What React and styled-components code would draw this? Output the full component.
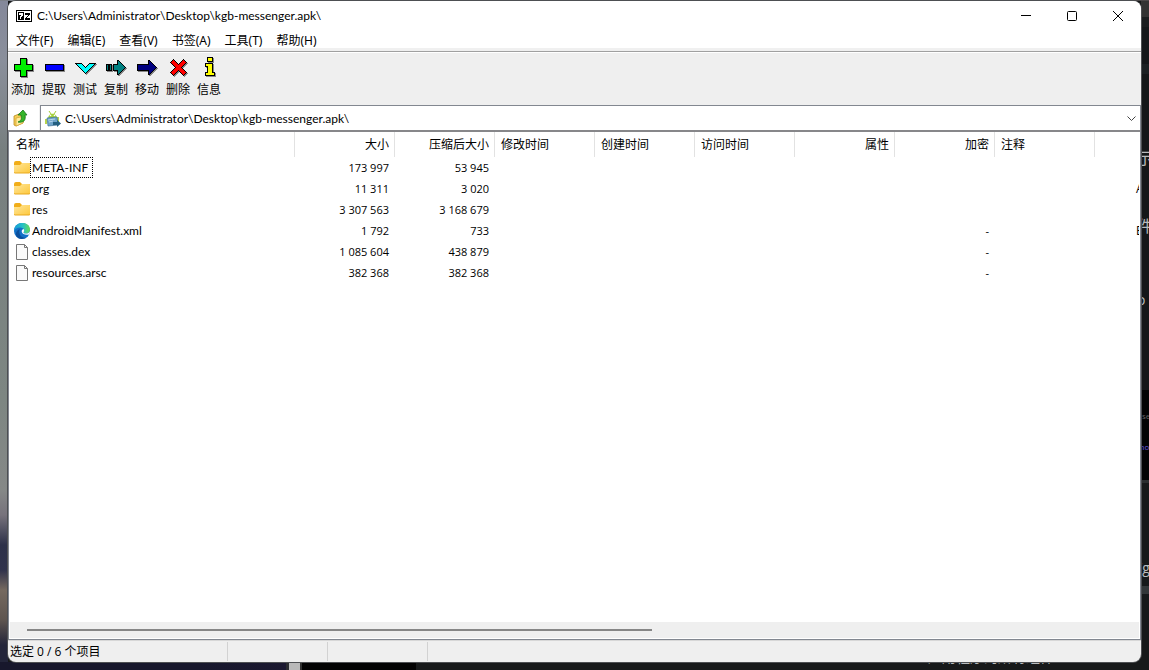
import React from "react";
import styled, { createGlobalStyle } from "styled-components";

const GlobalStyle = createGlobalStyle`
  * { box-sizing: border-box; }
  html, body, #root { height: 100%; margin: 0; }
  body, button, input {
    font-family: "Open Sans", "Noto Sans CJK SC", sans-serif;
    font-size: 12px;
    line-height: 16px;
    color: #000;
  }
  button { border: 0; padding: 0; background: none; }
`;

const nameFont = `"Lato", "Noto Sans CJK SC", sans-serif`;

const Desktop = styled.div`
  position: relative;
  display: flex;
  min-height: 100vh;
  padding: 1px 8px 8px;
  overflow: hidden;
  background:
    linear-gradient(90deg, #17172c 0 200px, #1b1830 286px, #2a2c30 286px 289px, #b9b9b9 289px 300px, #303030 300px 302px, #020202 302px 416px, #17191a 416px) 0 100% / 100% 8px no-repeat,
    linear-gradient(90deg, #7c8088 0 301px, #4b4849 301px) 0 0 / 100% 1px no-repeat,
    linear-gradient(180deg, #333 0 17px, #1b1d1f 17px 27px, #15171a 27px 64px, #1c2023 64px 74px, #151719 74px 390px, #030303 390px 480px, #2b2e30 480px 483px, #17191a 483px 586px, #333739 586px 594px, #17191a 594px) 100% 0 / 8px 100% no-repeat,
    linear-gradient(180deg, #84889a 0, #8a8f9b 60px, #777f7f 150px, #7d8682 400px, #858887 490px, #77737c 515px, #2d3149 545px, #30334c 570px, #75695f 590px, #5e5550 620px, #23253a 645px) 0 0 / 8px 100% no-repeat,
    #17191a;
`;

const BackText = styled.span`
  position: absolute;
  top: ${(p) => p.$top}px;
  left: ${(p) => p.$left || "calc(100% - 12px)"};
  font-size: ${(p) => p.$size || 16}px;
  line-height: 20px;
  white-space: nowrap;
  color: ${(p) => p.$color || "#b9bcbe"};
`;

const Window = styled.main`
  position: relative;
  display: flex;
  flex: 1;
  flex-direction: column;
  min-width: 0;
  overflow: hidden;
  border-radius: 8px;
  background: #efefef;
  box-shadow: 0 0 0 1px #4d4f52;
`;

const TitleBar = styled.header`
  display: flex;
  align-items: center;
  height: 29px;
  padding-left: 8px;
  background: #fff;
`;

const Title = styled.h1`
  flex: 1;
  margin: 0 0 0 5px;
  font-family: ${nameFont};
  font-size: 12px;
  font-weight: 400;
`;

const WindowButton = styled.button`
  display: grid;
  place-items: center;
  width: 46px;
  height: 28px;
`;

const MenuBar = styled.nav`
  display: flex;
  align-items: center;
  height: 20px;
  padding: 2px 0 0 1px;
  background: linear-gradient(#fff 18px, #f0f0f0 18px);
`;

const MenuItem = styled.button`
  padding: 0 7px;
  font-family: "Noto Sans", "Noto Sans CJK SC", sans-serif;
`;

const ToolBar = styled.div`
  display: flex;
  height: 54px;
  padding-top: 4px;
  border-top: 1px solid #a0a0a0;
  box-shadow: inset 0 1px #fff;
  margin-top: 1px;
`;

const ToolButton = styled.button`
  display: flex;
  flex-direction: column;
  align-items: center;
  width: 31px;
  padding-right: 1px;
  white-space: nowrap;
  svg { display: block; margin-bottom: 2px; }
`;

const AddressRow = styled.div`
  display: flex;
  height: 25px;
`;

const UpButton = styled.button`
  display: grid;
  place-items: center;
  width: 31px;
  padding-right: 5px;
  background: #fff;
`;

const AddressBox = styled.label`
  display: flex;
  flex: 1;
  align-items: center;
  gap: 4px;
  margin-left: 1px;
  padding: 1px 3px 0 4px;
  border: 1px solid #828790;
  border-bottom: 0;
  background: #fff;
`;

const AddressInput = styled.input`
  flex: 1;
  min-width: 0;
  padding: 0;
  border: 0;
  outline: 0;
  font-family: ${nameFont};
  background: none;
`;

const DropButton = styled.button`
  display: grid;
  place-items: center;
  width: 12px;
  height: 20px;
`;

const FilePane = styled.section`
  display: flex;
  flex: 1;
  flex-direction: column;
  min-height: 0;
  padding: 0 1px 1px;
  border: 1px solid #828790;
  border-top: 2px solid #87878a;
  background: #fff;
`;

const TableArea = styled.div`
  flex: 1;
  overflow: hidden;
`;

const FileTable = styled.table`
  width: 100%;
  table-layout: fixed;
  border-spacing: 0;
  th, td {
    padding: 0 5px 0 6px;
    overflow: hidden;
    font-weight: 400;
    white-space: nowrap;
  }
  td { height: 21px; }
`;

const Column = styled.col`
  width: ${(p) => (p.$width ? p.$width + "px" : "auto")};
`;

const HeadCell = styled.th`
  height: 25px;
  text-align: ${(p) => p.$align};
  border-right: ${(p) => (p.$last ? "0" : "1px solid #e2e2e2")};
`;

const Cell = styled.td`
  && { padding-right: 6px; }
  font-size: 11px;
  text-align: right;
`;

const CrcCell = styled.td`
  && { padding: 0 0 0 41px; }
`;

const NameCell = styled.td`
  && { padding: 0 0 0 4px; }
  > div { display: flex; align-items: center; }
`;

const FileName = styled.span`
  height: 21px;
  padding: ${(p) => (p.$focused ? "2px 4px 0 1px" : "3px 5px 0 2px")};
  border: ${(p) => (p.$focused ? "1px dotted #000" : "0")};
  font-family: ${nameFont};
`;

const ScrollTrack = styled.div`
  height: 16px;
  padding: 7px 16px 0 17px;
  background: #efefef;
`;

const ScrollThumb = styled.div`
  width: 57%;
  height: 2px;
  background: #868686;
`;

const StatusBar = styled.footer`
  display: flex;
  height: 22px;
  padding: 1px 0;
  border-top: 1px solid #d7d7d7;
`;

const StatusCell = styled.div`
  width: ${(p) => p.$width}px;
  padding: 2px 2px 0;
  border-right: 1px solid #d2d2d2;
`;

const SevenZipIcon = () => (
  <svg width="16" height="12" viewBox="0 0 16 12" shapeRendering="crispEdges" aria-hidden="true">
    <rect width="16" height="12" fill="#000" />
    <rect x="1" y="1" width="14" height="10" fill="#fff" />
    <rect x="2" y="2" width="6" height="8" fill="#000" />
    <path d="M3 3h4v3h-1v1h-1v2h-1v-3h1v-1h-2z" fill="#fff" />
    <path d="M9 3h5v2h-1v1h-1v1h-1v1h3v2h-5v-2h1v-1h1v-1h1v-1h-3z" fill="#000" />
  </svg>
);

const shapes = {
  add: { fill: "#00f000", d: "M9.500 2.500h6v6h6v6h-6v6h-6v-6h-6v-6h6z" },
  extract: { fill: "#0000ff", d: "M3.500 8.500h18v6h-18z" },
  test: { fill: "#00ffff", d: "M2.500 7.500h6l4 4 4-4h6l-10 10z" },
  copy: { fill: "#008080", d: "M2.500 8.500h2v6h-2zM5.500 8.500h2v6h-2zM9.500 8.500h4v-4h1l7 7-7 7h-1v-4h-4z" },
  move: { fill: "#000080", d: "M2.500 8.500h11v-4h1l7 7-7 7h-1v-4h-11z" },
  remove: { fill: "#ff0000", d: "M7.500 3.500l5 5 5-5 3 3-5 5 5 5-3 3-5-5-5 5-3-3 5-5-5-5z" },
  info: { fill: "#ffff00", d: "M10.500 1.500h5v4h-5zM8.500 7.500h7v9h2v3h-9v-3h2v-6h-2z" },
};

const ToolIcon = ({ kind }) => (
  <svg width="24" height="24" viewBox="0 0 24 24" shapeRendering="crispEdges" aria-hidden="true">
    <path d={shapes[kind].d} transform="translate(1 1)" fill="#888" stroke="#888" />
    <path d={shapes[kind].d} fill={shapes[kind].fill} stroke="#000" />
  </svg>
);

const UpIcon = () => (
  <svg width="16" height="18" viewBox="0 0 16 18" aria-hidden="true">
    <path d="M1 7l5-2 1 1 3-1v9l-7 3-2-1z" fill="#f5cf57" stroke="#bd8b21" strokeWidth=".8" />
    <path d="M3 17V9l9-2-2 7z" fill="#ffec9a" stroke="#d8a638" strokeWidth=".8" />
    <path d="M5 13c3-1 4-3 3-7H5l5-5 4 5h-2c1 5-1 8-7 7z" fill="#35b52a" stroke="#167619" strokeWidth=".8" />
  </svg>
);

const ApkIcon = () => (
  <svg width="16" height="16" viewBox="0 0 16 16" aria-hidden="true">
    <path d="M3 8c0-7 9-7 9 0z" fill="#a4d03a" />
    <path d="M4 0l2 3M11 0L9 3" stroke="#a4c934" />
    <circle cx="5.500" cy="4.500" r=".8" fill="#fff" />
    <circle cx="9.500" cy="4.500" r=".8" fill="#fff" />
    <path d="M0 8h2v5H0zM12 6h2v5h-2z" fill="#b7d44b" />
    <path d="M2 7l10-1 1 8-10 1z" fill="#6fa3c9" stroke="#407296" strokeWidth=".7" />
    <path d="M3 9l7-1M4 11l4-1" stroke="#b7d6ec" />
    <path d="M8 11h4V9l4 3.500-4 3.500v-2H8z" fill="#235f7f" />
  </svg>
);

const FolderIcon = () => (
  <svg width="16" height="16" viewBox="0 0 16 16" aria-hidden="true">
    <defs>
      <linearGradient id="folder" x1="0" y1="0" x2="1" y2="1">
        <stop stopColor="#ffe69a" />
        <stop offset="1" stopColor="#fdc83d" />
      </linearGradient>
    </defs>
    <path d="M0 3q0-2 2-2h4l2 2h7q1 0 1 1v6H0z" fill="#f1ad18" />
    <path d="M0 5h6l2-2h7q1 0 1 1v8q0 1-1 1H1q-1 0-1-1z" fill="url(#folder)" />
    <path d="M0 12q0 1 1 1h14q1 0 1-1" fill="none" stroke="#e9a91e" />
  </svg>
);

const EdgeIcon = () => (
  <svg width="16" height="16" viewBox="0 0 16 16" aria-hidden="true">
    <defs>
      <linearGradient id="edgeTop" x1="0" x2="1">
        <stop stopColor="#169bd8" />
        <stop offset=".55" stopColor="#27c0c5" />
        <stop offset="1" stopColor="#66dc57" />
      </linearGradient>
    </defs>
    <circle cx="8" cy="8" r="8" fill="#1271c8" />
    <path d="M0 8C0-2.500 16-2.500 16 6.500c0 3-2.500 4.300-5 4-1.800-.2-1.800-1-1.200-1.800C11 6.500 9 4.500 6 4.500c-3 0-5 1.500-6 3.500z" fill="url(#edgeTop)" />
    <path d="M6 6C4 9 6 15 12 14.800 10 16 7 16.500 4.500 15.200 0 12.500 2 7 6 6z" fill="#0b4f9d" />
    <path d="M9.500 6C6 7 7.500 13 15.200 11.500 16 10 16 9 16 8c-1 2.300-3 2.800-5 2.500-1.500-.3-1.900-1-1.200-1.800.6-.9.500-2-.3-2.700z" fill="#fff" />
  </svg>
);

const DocumentIcon = () => (
  <svg width="16" height="16" viewBox="0 0 16 16" aria-hidden="true">
    <path d="M2.500.5h8l3 3v12h-11z" fill="#fafafa" stroke="#777" />
    <path d="M10.500.5v3h3" fill="none" stroke="#777" />
  </svg>
);

const fileIcons = { folder: FolderIcon, edge: EdgeIcon, document: DocumentIcon };

const menus = ["文件(F)", "编辑(E)", "查看(V)", "书签(A)", "工具(T)", "帮助(H)"];

const tools = [
  ["add", "添加"],
  ["extract", "提取"],
  ["test", "测试"],
  ["copy", "复制"],
  ["move", "移动"],
  ["remove", "删除"],
  ["info", "信息"],
];

const columns = [
  ["名称", "left", 285],
  ["大小", "right", 100],
  ["压缩后大小", "right", 100],
  ["修改时间", "left", 100],
  ["创建时间", "left", 100],
  ["访问时间", "left", 100],
  ["属性", "right", 100],
  ["加密", "right", 100],
  ["注释", "left", 100],
  ["", "right", 0],
];

const files = [
  { name: "META-INF", icon: "folder", size: "173 997", packed: "53 945", focused: true },
  { name: "org", icon: "folder", size: "11 311", packed: "3 020", crc: "A" },
  { name: "res", icon: "folder", size: "3 307 563", packed: "3 168 679" },
  { name: "AndroidManifest.xml", icon: "edge", size: "1 792", packed: "733", encrypted: "-", crc: "E" },
  { name: "classes.dex", icon: "document", size: "1 085 604", packed: "438 879", encrypted: "-" },
  { name: "resources.arsc", icon: "document", size: "382 368", packed: "382 368", encrypted: "-" },
];

const path = "C:\\Users\\Administrator\\Desktop\\kgb-messenger.apk\\";

export default function App() {
  return (
    <Desktop>
      <GlobalStyle />
      <BackText $top={148}>示为</BackText>
      <BackText $top={216}>件</BackText>
      <BackText $top={290} $size={14}>o</BackText>
      <BackText $top={406} $size={8} $color="#666">use</BackText>
      <BackText $top={437} $size={8} $color="#6a5be0">mod</BackText>
      <BackText $top={558} $size={14}>/g</BackText>
      <BackText $top={647} $left="928px" $size={14}>应用程序的所有组件</BackText>
      <Window>
        <TitleBar>
          <SevenZipIcon />
          <Title>{path}</Title>
          <WindowButton aria-label="最小化">
            <svg width="10" height="10"><path d="M0 4.500h10" stroke="#000" /></svg>
          </WindowButton>
          <WindowButton aria-label="最大化">
            <svg width="10" height="10"><rect x=".5" y=".5" width="9" height="9" rx="1" fill="none" stroke="#000" /></svg>
          </WindowButton>
          <WindowButton aria-label="关闭">
            <svg width="10" height="10"><path d="M0 0l10 10M10 0L0 10" stroke="#000" /></svg>
          </WindowButton>
        </TitleBar>
        <MenuBar>
          {menus.map((m) => <MenuItem key={m}>{m}</MenuItem>)}
        </MenuBar>
        <ToolBar>
          {tools.map(([kind, label]) => (
            <ToolButton key={kind}>
              <ToolIcon kind={kind} />
              {label}
            </ToolButton>
          ))}
        </ToolBar>
        <AddressRow>
          <UpButton aria-label="向上"><UpIcon /></UpButton>
          <AddressBox>
            <ApkIcon />
            <AddressInput aria-label="路径" defaultValue={path} />
            <DropButton aria-label="展开">
              <svg width="9" height="5"><path d="M.5.5l4 4 4-4" fill="none" stroke="#444" /></svg>
            </DropButton>
          </AddressBox>
        </AddressRow>
        <FilePane>
          <TableArea>
            <FileTable>
              <colgroup>
                {columns.map(([label, , width]) => <Column key={label} $width={width} />)}
              </colgroup>
              <thead>
                <tr>
                  {columns.map(([label, align, width]) => (
                    <HeadCell key={label} $align={align} $last={!width}>{label}</HeadCell>
                  ))}
                </tr>
              </thead>
              <tbody>
                {files.map((f) => {
                  const Icon = fileIcons[f.icon];
                  return (
                    <tr key={f.name}>
                      <NameCell>
                        <div>
                          <Icon />
                          <FileName $focused={f.focused}>{f.name}</FileName>
                        </div>
                      </NameCell>
                      <Cell>{f.size}</Cell>
                      <Cell>{f.packed}</Cell>
                      <Cell />
                      <Cell />
                      <Cell />
                      <Cell />
                      <Cell>{f.encrypted}</Cell>
                      <Cell />
                      <CrcCell>{f.crc}</CrcCell>
                    </tr>
                  );
                })}
              </tbody>
            </FileTable>
          </TableArea>
          <ScrollTrack><ScrollThumb /></ScrollTrack>
        </FilePane>
        <StatusBar>
          <StatusCell $width={220}>选定 0 / 6 个项目</StatusCell>
          <StatusCell $width={100} />
          <StatusCell $width={100} />
        </StatusBar>
      </Window>
    </Desktop>
  );
}
